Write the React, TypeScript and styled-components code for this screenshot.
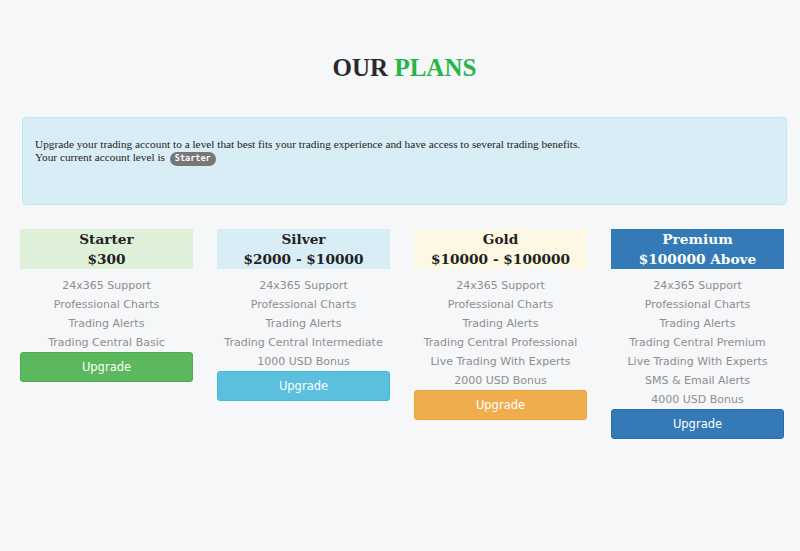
import styled, { createGlobalStyle } from 'styled-components'

type Tone = 'starter' | 'silver' | 'gold' | 'premium'

const tones: Record<Tone, { head: string; headText: string; button: string; border: string }> = {
  starter: { head: '#dff0d8', headText: '#222', button: '#5cb85c', border: '#4cae4c' },
  silver: { head: '#d9edf7', headText: '#222', button: '#5bc0de', border: '#46b8da' },
  gold: { head: '#fcf8e3', headText: '#222', button: '#f0ad4e', border: '#eea236' },
  premium: { head: '#337ab7', headText: '#fff', button: '#337ab7', border: '#2e6da4' },
}

const plans: { tone: Tone; name: string; price: string; features: string[] }[] = [
  {
    tone: 'starter',
    name: 'Starter',
    price: '$300',
    features: ['24x365 Support', 'Professional Charts', 'Trading Alerts', 'Trading Central Basic'],
  },
  {
    tone: 'silver',
    name: 'Silver',
    price: '$2000 - $10000',
    features: [
      '24x365 Support',
      'Professional Charts',
      'Trading Alerts',
      'Trading Central Intermediate',
      '1000 USD Bonus',
    ],
  },
  {
    tone: 'gold',
    name: 'Gold',
    price: '$10000 - $100000',
    features: [
      '24x365 Support',
      'Professional Charts',
      'Trading Alerts',
      'Trading Central Professional',
      'Live Trading With Experts',
      '2000 USD Bonus',
    ],
  },
  {
    tone: 'premium',
    name: 'Premium',
    price: '$100000 Above',
    features: [
      '24x365 Support',
      'Professional Charts',
      'Trading Alerts',
      'Trading Central Premium',
      'Live Trading With Experts',
      'SMS & Email Alerts',
      '4000 USD Bonus',
    ],
  },
]

const GlobalStyle = createGlobalStyle`
  html, body {
    margin: 0;
    padding: 0;
    background: #f5f7f9;
  }
  body {
    font-family: "Liberation Serif", serif;
    color: #333;
  }
`

export default function App() {
  return (
    <>
      <GlobalStyle />
      <Page>
        <Heading>
          OUR <span>PLANS</span>
        </Heading>

        <Alert>
          <p>
            Upgrade your trading account to a level that best fits your trading experience and have
            access to several trading benefits.
            <br />
            Your current account level is <Badge>Starter</Badge>
          </p>
        </Alert>

        <Plans>
          {plans.map((plan) => (
            <Plan key={plan.name}>
              <PlanHead tone={plan.tone}>
                <div>{plan.name}</div>
                <div>{plan.price}</div>
              </PlanHead>
              <Features>
                {plan.features.map((f) => (
                  <li key={f}>{f}</li>
                ))}
              </Features>
              <UpgradeButton tone={plan.tone}>Upgrade</UpgradeButton>
            </Plan>
          ))}
        </Plans>
      </Page>
    </>
  )
}

const Page = styled.div`
  width: 800px;
  min-height: 551px;
  padding: 52px 0 0;
  box-sizing: border-box;
`

const Heading = styled.h2`
  margin: 0 0 33px;
  text-align: center;
  padding-left: 9px;
  font-family: "Liberation Serif", serif;
  font-size: 25px;
  line-height: 32px;
  font-weight: 700;
  color: #2a2a2a;

  span {
    color: #28b446;
  }
`

const Alert = styled.div`
  margin: 0 13px 24px 22px;
  height: 88px;
  box-sizing: border-box;
  background: #d9edf7;
  border: 1px solid #bce8f1;
  border-radius: 4px;
  padding: 20px 12px;
  color: #222;

  p {
    margin: 0;
    font-size: 11.3px;
    line-height: 13px;
  }
`

const Badge = styled.span`
  display: inline-block;
  margin-left: 2px;
  padding: 1px 5px 2px;
  border-radius: 7px;
  background: #777;
  color: #fff;
  font-family: "DejaVu Sans Mono", monospace;
  font-weight: 700;
  font-size: 8.5px;
  line-height: 11px;
  vertical-align: 0;
`

const Plans = styled.div`
  display: grid;
  grid-template-columns: repeat(4, 173px);
  column-gap: 24px;
  align-items: start;
  margin-left: 20px;
`

const Plan = styled.div`
  display: flex;
  flex-direction: column;
`

const PlanHead = styled.div<{ tone: Tone }>`
  height: 40px;
  background: ${(p) => tones[p.tone].head};
  color: ${(p) => tones[p.tone].headText};
  text-align: center;
  font-family: "DejaVu Serif", serif;
  font-weight: 700;
  font-size: 13.7px;
  line-height: 20px;
`

const Features = styled.ul`
  list-style: none;
  margin: 0;
  padding: 7px 0 0;
  text-align: center;
  font-family: "DejaVu Sans", Verdana, sans-serif;
  font-size: 11px;
  line-height: 19px;
  color: #8e8e8e;
`

const UpgradeButton = styled.button<{ tone: Tone }>`
  height: 30px;
  margin-top: 0;
  border: 1px solid ${(p) => tones[p.tone].border};
  border-radius: 3px;
  background: ${(p) => tones[p.tone].button};
  color: #fff;
  font-family: "DejaVu Sans", Verdana, sans-serif;
  font-size: 11.5px;
  cursor: pointer;
`
